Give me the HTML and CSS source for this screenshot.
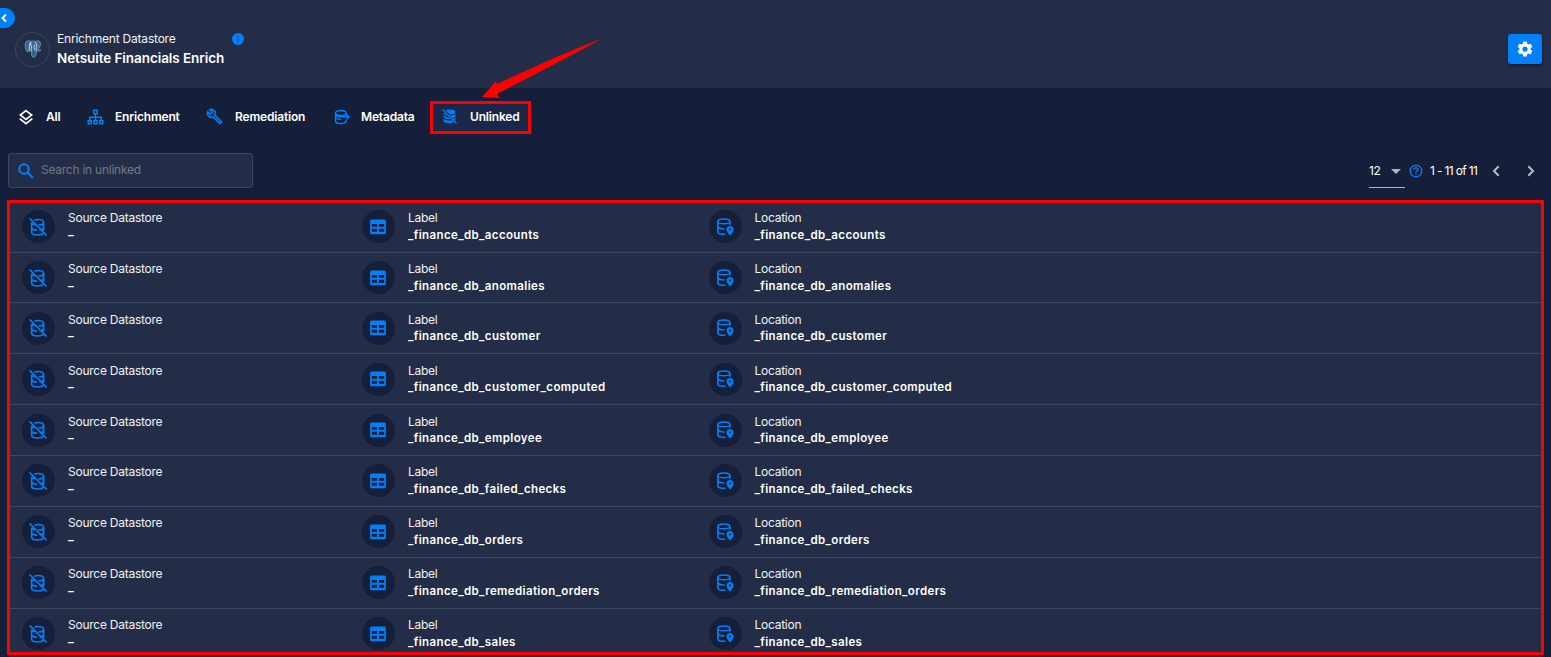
FILE: index.html
```html
<!DOCTYPE html>
<html lang="en">
<head>
<meta charset="utf-8">
<title>Netsuite Financials Enrich</title>
<link rel="stylesheet" href="styles.css">
</head>
<body>
<svg class="sprite" aria-hidden="true">
  <symbol id="db-off" viewBox="0 0 24 24">
    <g fill="none" stroke="currentColor" stroke-width="2.200">
      <path d="M7 2.900C8.500 2.200 10 2 12 2c4.500 0 7.500 1.600 7.500 3.600S17 9.200 12.500 9.300M3.500 6v13c0 2 3.500 3.600 8.500 3.600 3.400 0 6-.8 7.300-2M19.500 5.600v11.500M3.500 12.800c0 2 3 3.300 7.500 3.500M3.500 6.200c.4 1.300 2 2.300 4.300 2.800M14 15.600c3.500-.4 5.500-1.500 5.500-3"/>
      <path d="M.8.600 23.400 23.200"/>
    </g>
  </symbol>
  <symbol id="table" viewBox="0 0 24 24">
    <path fill="currentColor" d="M3.500 2h17a2 2 0 0 1 2 2v15.500a2 2 0 0 1-2 2h-17a2 2 0 0 1-2-2V4a2 2 0 0 1 2-2m.3 6v3.700h7V8zm9.400 0v3.700h7V8zm-9.400 6.300v4h7v-4zm9.400 0v4h7v-4z"/>
  </symbol>
  <symbol id="db-pin" viewBox="0 0 24 24">
    <g fill="none" stroke="currentColor" stroke-width="2.200"><ellipse cx="10.500" cy="4.500" rx="8" ry="3.200"/><path d="M2.500 4.500v14c0 1.800 3.600 3.200 10 3.200M2.500 11.300c0 2 3.500 3.400 9 3.300M18.500 4.500V9"/></g>
    <path fill="currentColor" fill-rule="evenodd" d="M18.700 10.500c-2.700 0-4.700 2-4.700 4.700 0 3.500 4.700 8 4.700 8s4.700-4.500 4.700-8c0-2.700-2-4.700-4.700-4.700m0 3.300a1.400 1.400 0 1 1 0 2.800 1.400 1.400 0 0 1 0-2.800"/>
  </symbol>
</svg>

<header class="header">
  <button class="collapse" aria-label="Collapse"><svg width="8" height="10" viewBox="0 0 8 10"><path d="M6 1.500 2.500 5 6 8.500" fill="none" stroke="#fff" stroke-width="1.900"/></svg></button>
  <div class="logo">
    <svg width="18" height="18" viewBox="0 0 18 18">
      <path d="M2.500 1.300C4 .4 6 .8 7 1.300c1-.5 3-.5 4 0 2-.8 4.600-.7 5.300 1 .8 2-.7 5.700-2 7.200 1 .5 2.500.2 2.700.6-.5 1.300-3 1.400-4.500.8-.3 2-.1 4.400-1.300 5.600-1 1-3 .8-3.500-.6-.5-1.500 0-3.500-.3-5.100-.8.700-2 .8-2.700.2-.4.700-1.200 1.200-2 .3C1.200 9.300.2 3.200 2.500 1.300z" fill="#336791" stroke="#a9b6c6" stroke-width=".5"/>
      <path d="M6.800 2C5 3.500 5.500 7 5.200 10.500M7 2c-1 2 1 4 .4 6.500-.2 1-.2 1.700 0 2.300M11 2c2 1.500 2 5 1.200 7.500-.4 1-.2 1.300.4 1.500M10.800 4.500c-1 1.500-1 4 0 5.500" fill="none" stroke="#dce3ea" stroke-width=".9"/>
    </svg>
  </div>
  <div class="titles">
    <div class="kicker">Enrichment Datastore</div>
    <div class="title">Netsuite Financials Enrich</div>
  </div>
  <svg class="info" viewBox="0 0 12 12"><circle cx="6" cy="6" r="6" fill="#0080fa"/><path d="M6 2.700v1.400M6 5v4.200" stroke="#1b3fa0" stroke-width="1.200"/></svg>
  <button class="settings" aria-label="Settings"><svg width="18" height="18" viewBox="0 0 24 24"><path fill="#fff" d="M12 15.500A3.500 3.500 0 0 1 8.500 12 3.500 3.500 0 0 1 12 8.500a3.500 3.500 0 0 1 3.500 3.500 3.500 3.500 0 0 1-3.500 3.500m7.430-2.530c.04-.32.070-.64.070-.97s-.03-.66-.07-1l2.110-1.630c.19-.15.240-.42.120-.64l-2-3.460c-.12-.22-.39-.31-.61-.22l-2.490 1c-.52-.39-1.060-.73-1.690-.98l-.37-2.650A.506.506 0 0 0 14 2h-4c-.25 0-.46.18-.5.420l-.37 2.650c-.63.250-1.170.590-1.690.980l-2.490-1c-.22-.09-.49 0-.61.220l-2 3.460c-.13.220-.07.490.12.640L4.570 11c-.04.340-.07.670-.07 1s.03.650.07.970l-2.110 1.660c-.19.150-.25.420-.12.640l2 3.460c.12.220.39.300.61.220l2.490-1.010c.52.400 1.060.740 1.690.990l.37 2.650c.04.240.25.420.5.420h4c.25 0 .46-.18.500-.42l.37-2.650c.63-.26 1.170-.59 1.690-.99l2.490 1.010c.22.080.49 0 .61-.22l2-3.460c.12-.22.070-.49-.12-.64z"/></svg></button>
</header>

<nav class="tabs">
  <a class="tab all"><svg width="16" height="16" viewBox="0 0 24 24" fill="none" stroke="currentColor" stroke-width="2.500"><path d="M12 2.500 20.500 9 12 15.500 3.500 9zM2.500 14.500 12 22l9.500-7.500"/></svg><span>All</span></a>
  <a class="tab enrichment"><svg width="17" height="16" viewBox="0 0 17 16" fill="none" stroke="currentColor" stroke-width="1.500"><path d="M6.700 1.200h3.600v3.600H6.700zM1.200 11.700h3v3h-3zM7 11.700h3v3H7zM12.800 11.700h3v3h-3zM8.500 5v6.500M2.700 11.500V8.300h11.600v3.200"/></svg><span>Enrichment</span></a>
  <a class="tab remediation"><svg width="17" height="17" viewBox="0 0 24 24"><path fill="currentColor" stroke="currentColor" stroke-width=".5" d="m22.610 19-9.080-9.090c.930-2.340.450-5.100-1.440-7C9.790.610 6.210.400 3.660 2.260L7.500 6.110 6.080 7.520 2.250 3.690C.390 6.230.600 9.820 2.900 12.110c1.860 1.860 4.570 2.350 6.890 1.480l9.110 9.110c.390.390 1.020.390 1.410 0l2.300-2.300c.400-.38.400-1.010 0-1.400m-3 1.590-9.460-9.460c-.61.450-1.290.720-2 .820-1.360.200-2.790-.21-3.830-1.250C3.370 9.760 2.930 8.500 3 7.260l3.090 3.090 4.240-4.240-3.090-3.090c1.240-.07 2.490.370 3.440 1.310a4.470 4.470 0 0 1 1.240 3.960 4.350 4.350 0 0 1-.88 1.960l9.450 9.450z"/></svg><span>Remediation</span></a>
  <a class="tab metadata"><svg width="16" height="16" viewBox="0 0 16 16" fill="none" stroke="currentColor" stroke-width="1.400"><ellipse cx="6.800" cy="4" rx="5.300" ry="2.500"/><path d="M1.500 4v8c0 1.500 2.300 2.500 5.300 2.500s5.300-1 5.300-2.500v-1M12.100 4v1.500M1.500 8.200c.3 1.300 2.300 2.300 5.800 2.200M1.500 6.300c1 .9 2.500 1.400 4.500 1.500h8.500M12.300 5.200 15 7.900l-2.700 2.700"/></svg><span>Metadata</span></a>
  <a class="tab unlinked"><svg width="15" height="15" viewBox="0 0 15 15"><path fill="currentColor" d="M3.500 1.300C6 .2 10 .2 12 1.300c2 1 1.800 2.500.2 3.300-1.100.6-2.500.9-4.100.9zM1.500 3.500l3.800 3.600C3.200 6.700 1.500 5.900 1.500 4.700zM13.500 4.800v2.400c0 1-1.200 1.700-3 2L8 6.500c2.300 0 4.400-.5 5.500-1.700M1.500 6.700c1.300 1.100 3.500 1.600 5.500 1.700l1.700 1.700C5 10.200 1.500 9.400 1.500 8zM1.500 10c2 1.500 5.700 1.900 8.400 1.300l2 2c-3.500 1.500-10.400.9-10.400-1.300zM13.500 8.800v3.500L11 10.200q1.500-.4 2.500-1.400"/><path d="M.5.500 14.500 14.500" stroke="currentColor" stroke-width="1.300"/></svg><span>Unlinked</span></a>
</nav>

<div class="toolbar">
  <div class="search"><svg width="16" height="16" viewBox="0 0 16 16" fill="none" stroke="#0080fa" stroke-width="2"><circle cx="6" cy="6" r="4.700"/><path d="m9.500 9.500 5.300 5.300"/></svg><span>Search in unlinked</span></div>
  <div class="pager">
    <div class="size"><span>12</span><svg width="10" height="5" viewBox="0 0 10 5"><path d="M0 0h10L5 5z" fill="#b0b4be"/></svg></div>
    <svg class="help" viewBox="0 0 14 14" fill="none" stroke="#0080fa" stroke-width="1.300"><circle cx="7" cy="7" r="5.800"/><path d="M5 5.700C5 3.100 9 3.200 9 5.500 9 6.800 7 6.900 7 8.400M7 9.400v1.300"/></svg>
    <span class="range">1 - 11 of 11</span>
    <svg class="prev" viewBox="0 0 8 12"><path d="M6.700 1.300 2 6l4.700 4.700" fill="none" stroke="#b7bac2" stroke-width="2"/></svg>
    <svg class="next" viewBox="0 0 8 12"><path d="M1.300 1.300 6 6l-4.700 4.700" fill="none" stroke="#b7bac2" stroke-width="2"/></svg>
  </div>
</div>

<main class="list" id="list"></main>

<div class="mark mark-list"></div>
<div class="mark mark-tab"></div>
<svg class="arrow" viewBox="0 0 124 62"><path d="M124 0C95 11 50 31 18 46L17 43 3 59l18 1-3-4C50 39 85 22 124 0z" fill="#f00"/></svg>
<script src="rows.js"></script>
</body>
</html>
```
FILE: styles.css
```css
* { box-sizing: border-box; }
html, body { height: 100%; }
body {
  margin: 0;
  overflow: hidden;
  position: relative;
  background: #161f39;
  color: #fff;
  font-family: Inter, "Open Sans", sans-serif;
  font-size: 12px;
}
svg { display: block; flex: none; }
button { border: 0; padding: 0; display: flex; align-items: center; }
.sprite { position: absolute; width: 0; height: 0; }

.header {
  position: relative;
  display: flex;
  align-items: flex-start;
  height: 88px;
  padding: 31px 9px 0 15px;
  background: #232d47;
}
.collapse {
  position: absolute;
  left: 0;
  top: 8px;
  width: 15px;
  height: 20px;
  border-radius: 0 10px 10px 0;
  background: #0080fa;
}
.logo {
  display: flex;
  align-items: center;
  justify-content: center;
  width: 35px;
  height: 35px;
  margin-top: 1px;
  border: 1px solid #3b455d;
  border-radius: 50%;
}
.logo svg { margin-bottom: 2px; }
.titles { width: 175px; margin-left: 7px; white-space: nowrap; }
.kicker { line-height: 16px; letter-spacing: -.2px; color: #f1f2f5; }
.title { margin-top: 2px; line-height: 19px; font-size: 13.500px; font-weight: 600; letter-spacing: -.07px; }
.info { width: 12px; height: 12px; margin-top: 2px; }
.settings {
  justify-content: center;
  width: 34px;
  height: 30px;
  margin: 3px 0 0 auto;
  border-radius: 3px;
  background: #0080fa;
  box-shadow: 0 2px 3px rgba(0, 0, 0, .35);
}

.tabs { display: flex; height: 58px; padding: 13px 0 0 11px; }
.tab {
  display: flex;
  align-items: center;
  height: 31px;
  font-size: 12px;
  font-weight: 600;
  letter-spacing: -.18px;
  white-space: nowrap;
}
.tab svg { color: #0080fa; }
.tab span { padding-bottom: 1px; }
.all { width: 76px; padding-left: 7px; gap: 12px; }
.all svg { color: #fff; }
.enrichment { width: 119px; gap: 11px; }
.remediation { width: 128px; gap: 12px; }
.metadata { width: 98px; gap: 11px; }
.unlinked { width: 97px; padding-left: 10px; gap: 13px; background: #1b2748; }

.toolbar { display: flex; justify-content: space-between; height: 55.730px; padding: 7px 16px 0 8px; }
.search {
  display: flex;
  align-items: center;
  gap: 7px;
  width: 245px;
  height: 35px;
  padding-left: 9px;
  border: 1px solid #3d475f;
  border-radius: 3px;
  background: #232d47;
  color: #747982;
  letter-spacing: -.25px;
}
.search span { padding-bottom: 2px; }
.pager { display: flex; align-items: center; height: 36px; white-space: nowrap; }
.size {
  display: flex;
  align-items: center;
  justify-content: space-between;
  width: 36px;
  height: 32px;
  padding-right: 4px;
  border-bottom: 1px solid #b0b4be;
  margin-top: 1px;
  letter-spacing: -.3px;
}
.size span, .range { padding-bottom: 1px; }
.help { width: 14px; height: 14px; margin-left: 4px; }
.range { width: 62px; margin-left: 7px; letter-spacing: -.65px; }
.prev { width: 8px; height: 12px; margin-bottom: 1px; }
.next { width: 8px; height: 12px; margin: 0 0 1px 27px; }

.list { margin: 0 9px; }
.row {
  display: grid;
  grid-template-columns: 340px 346.500px 1fr;
  height: 50.870px;
  padding: 0 0 0 13px;
  border-bottom: 1px solid #3d475f;
  background: #232d47;
}
.cell { display: flex; align-items: center; gap: 13px; }
.badge {
  display: flex;
  align-items: center;
  justify-content: center;
  width: 33px;
  height: 33px;
  padding-right: 1px;
  border-radius: 50%;
  background: #161f39;
  color: #0080fa;
}
.badge svg { width: 18px; height: 18px; }
.text { line-height: 16.500px; white-space: nowrap; }
.name { font-size: 12px; color: #f1f2f5; letter-spacing: -.25px; }
.value { font-size: 11.500px; font-weight: 600; letter-spacing: .38px; }

.mark { position: absolute; border: 3px solid #f00; }
.mark-list { left: 7px; top: 200px; width: 1537px; height: 455px; }
.mark-tab { left: 430px; top: 101px; width: 101px; height: 33px; }
.arrow { position: absolute; left: 479px; top: 38px; width: 124px; height: 62px; }
```
FILE: rows.js
```javascript
const names = [
  "accounts", "anomalies", "customer", "customer_computed", "employee",
  "failed_checks", "orders", "remediation_orders", "sales"
];

const cell = (icon, name, value) => `
  <div class="cell">
    <div class="badge"><svg><use href="#${icon}"/></svg></div>
    <div class="text"><div class="name">${name}</div><div class="value">${value}</div></div>
  </div>`;

document.getElementById("list").innerHTML = names.map(n => `
  <div class="row">
    ${cell("db-off", "Source Datastore", "–")}
    ${cell("table", "Label", "_finance_db_" + n)}
    ${cell("db-pin", "Location", "_finance_db_" + n)}
  </div>`).join("");
```
